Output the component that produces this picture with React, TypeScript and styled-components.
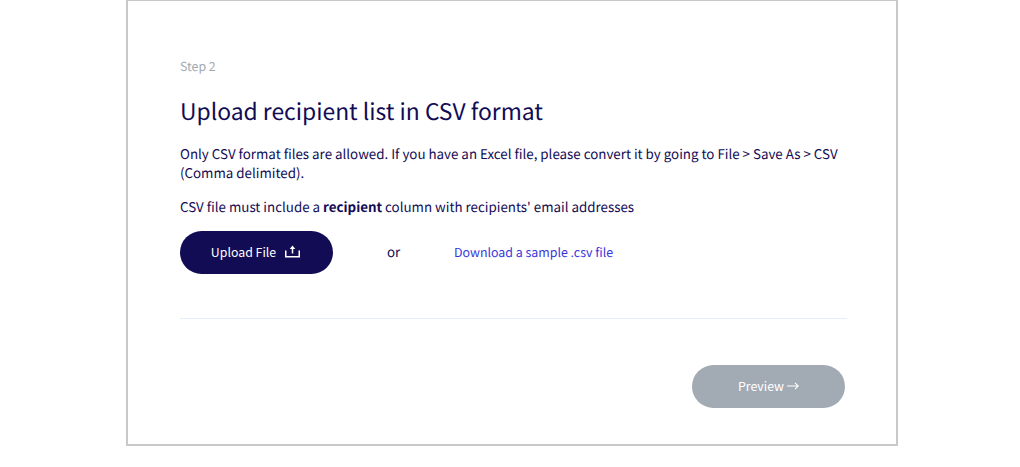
import React from "react";
import styled, { createGlobalStyle } from "styled-components";

const GlobalStyle = createGlobalStyle`
  body { margin: 0; background: #fff; }
  *, *::before, *::after { box-sizing: border-box; }
`;

const Page = styled.div`
  height: 467px;
  overflow: hidden;
  padding-left: 126px;
  font-family: "Noto Sans CJK SC", "Noto Sans", sans-serif;
  color: #120c55;
  text-rendering: geometricPrecision;
`;

const Card = styled.main`
  width: 772px;
  height: 446px;
  padding: 55px 49px 0 52px;
  border: 2px solid #c8c8c8;
  border-top-width: 1px;
`;

const StepLabel = styled.div`
  font-size: 12.4px;
  line-height: 20px;
  color: #a2aab4;
`;

const Title = styled.h1`
  margin: 16px 0 0;
  font-size: 22.86px;
  font-weight: 400;
  line-height: 36px;
  white-space: nowrap;
`;

const Description = styled.div`
  display: grid;
  gap: 15px;
  margin-top: 16px;
`;

const Paragraph = styled.p`
  margin: 0;
  font-size: 13.35px;
  line-height: 19px;
`;

const Actions = styled.div`
  display: flex;
  align-items: center;
  margin-top: 15px;
  font-size: 13.33px;
`;

const PillButton = styled.button<{ $muted?: boolean }>`
  display: flex;
  align-items: center;
  justify-content: center;
  gap: 9px;
  width: 153px;
  height: 43px;
  padding: 0 0 2px;
  border: 0;
  border-radius: 22px;
  background: ${(p) => (p.$muted ? "#a2aab4" : "#120c55")};
  color: #fff;
  font-family: inherit;
  font-size: 12.35px;
  line-height: 20px;
`;

const Or = styled.span`
  width: 121px;
  padding-bottom: 2px;
  text-align: center;
`;

const SampleLink = styled.a`
  padding-bottom: 2px;
  color: #3a35dc;
  font-size: 12.4px;
  text-decoration: none;
`;

const Divider = styled.hr`
  width: 667px;
  height: 1px;
  margin: 44px 0 0;
  border: 0;
  background: #e6ebff;
`;

const Footer = styled.footer`
  display: flex;
  justify-content: flex-end;
  padding: 46px 2px 0 0;
`;

const UploadIcon = () => (
  <svg width="15" height="13" viewBox="0 0 15 13" fill="none" stroke="#fff" strokeWidth="1.5">
    <path d="M.75 5.5v6.2h13.5V5.5" />
    <path d="M7.5 8.5V2" />
    <path d="M4.7 4 7.5.5 10.3 4z" fill="#fff" stroke="none" />
  </svg>
);

const ArrowIcon = () => (
  <svg width="12" height="8" viewBox="0 0 12 8" fill="none" stroke="#fff" strokeWidth="1.1">
    <path d="M0 4h11.2M8 .8 11.2 4 8 7.2" />
  </svg>
);

const UploadButton = styled(PillButton)`
  padding-right: 2px;
`;

const PreviewButton = styled(PillButton)`
  gap: 3px;
`;

export default function App() {
  return (
    <Page>
      <GlobalStyle />
      <Card>
        <StepLabel>Step 2</StepLabel>
        <Title>Upload recipient list in CSV format</Title>
        <Description>
          <Paragraph>
            Only CSV format files are allowed. If you have an Excel file, please convert it by going
            to File &gt; Save As &gt; CSV (Comma delimited).
          </Paragraph>
          <Paragraph>
            CSV file must include a <strong>recipient</strong> column with recipients' email
            addresses
          </Paragraph>
        </Description>
        <Actions>
          <UploadButton>
            Upload File
            <UploadIcon />
          </UploadButton>
          <Or>or</Or>
          <SampleLink>Download a sample .csv file</SampleLink>
        </Actions>
        <Divider />
        <Footer>
          <PreviewButton $muted>
            Preview
            <ArrowIcon />
          </PreviewButton>
        </Footer>
      </Card>
    </Page>
  );
}
